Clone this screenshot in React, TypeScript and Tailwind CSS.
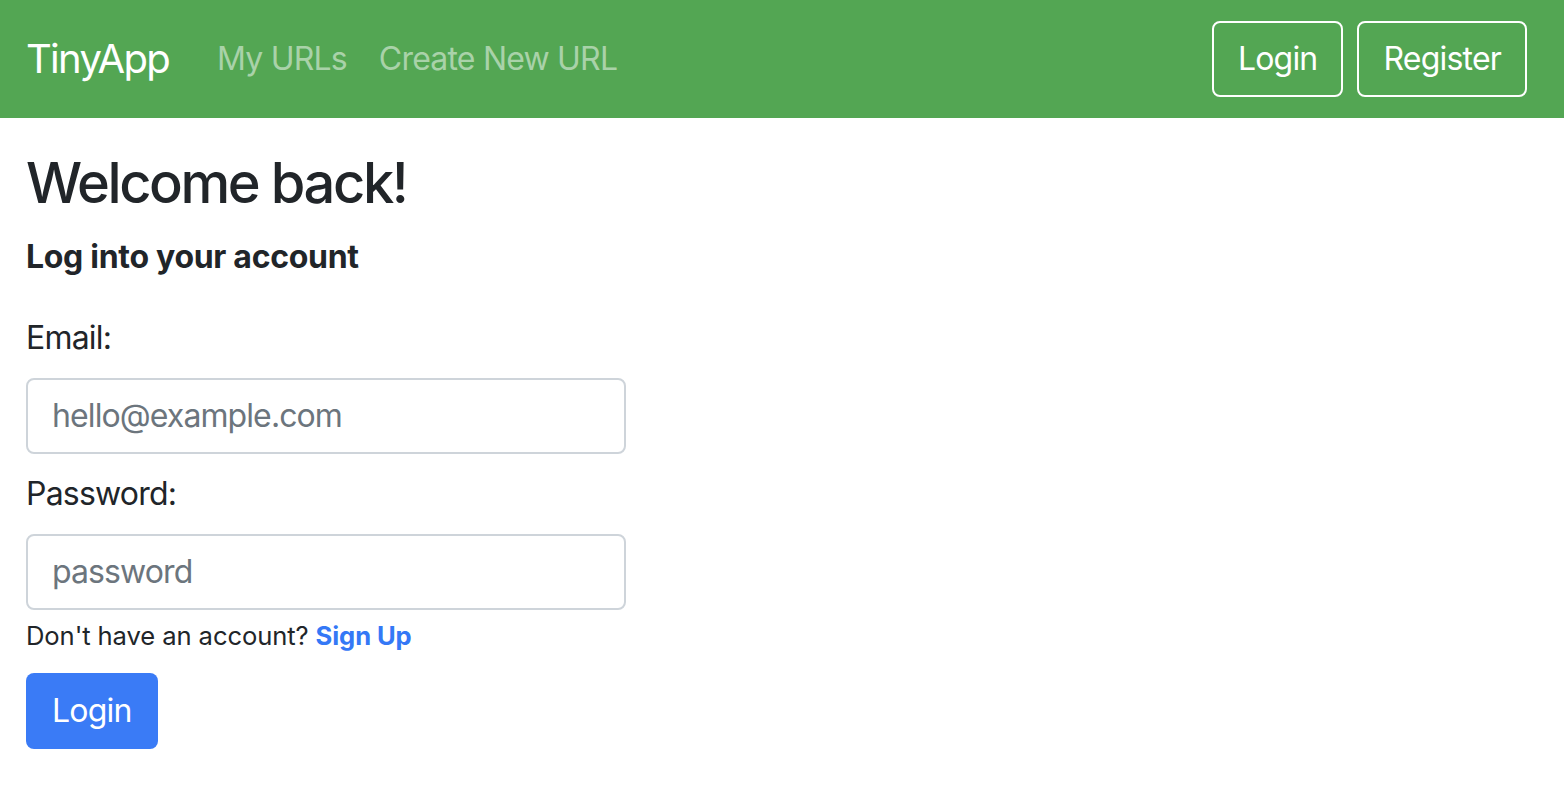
export default function App() {
  return (
    <div className="min-h-screen bg-white font-['Inter',sans-serif] text-[#212529]">
      <nav className="flex h-[118px] items-center justify-between bg-[#53a653] pl-[26px] pr-[37px]">
        <div className="flex items-center">
          <a className="text-[40px] leading-[1.5] tracking-[-1.7px] text-white" href="#">
            TinyApp
          </a>
          <div className="ml-[48px] flex items-center gap-[32px] text-[32px] leading-[1.5] tracking-[-0.8px] text-[#a9d2a9]">
            <a href="#">My URLs</a>
            <a href="#">Create New URL</a>
          </div>
        </div>
        <div className="flex items-center gap-[14px]">
          <button className="h-[76px] rounded-[8px] border-2 border-white px-[24px] text-[32px] tracking-[-0.8px] text-white">
            Login
          </button>
          <button className="h-[76px] rounded-[8px] border-2 border-white px-[24px] text-[32px] tracking-[-0.8px] text-white">
            Register
          </button>
        </div>
      </nav>

      <main className="px-[26px] pt-[32px]">
        <h1 className="text-[56px] font-medium leading-[1.2] tracking-[-2.4px]">Welcome back!</h1>
        <h2 className="mt-[21px] text-[32px] font-bold leading-[1.2] tracking-[-0.3px]">Log into your account</h2>

        <form className="mt-[37px] w-[600px]">
          <label className="block text-[32px] leading-[1.5] tracking-[-0.8px]" htmlFor="email">
            Email:
          </label>
          <input
            className="mt-[16px] block h-[76px] w-full rounded-[8px] border-2 border-[#ced4da] px-[24px] text-[32px] tracking-[-0.9px] placeholder:text-[#6c757d] focus:outline-none"
            id="email"
            placeholder="hello@example.com"
            type="email"
          />
          <label className="mt-[16px] block text-[32px] leading-[1.5] tracking-[-0.8px]" htmlFor="password">
            Password:
          </label>
          <input
            className="mt-[16px] block h-[76px] w-full rounded-[8px] border-2 border-[#ced4da] px-[24px] text-[32px] tracking-[-0.9px] placeholder:text-[#6c757d] focus:outline-none"
            id="password"
            placeholder="password"
            type="password"
          />
          <p className="mt-[7px] text-[25.6px] leading-[1.5] tracking-[-0.1px]">
            Don't have an account?{" "}
            <a className="font-bold text-[#3478f6]" href="#">
              Sign Up
            </a>
          </p>
          <button
            className="mt-[18px] h-[76px] rounded-[8px] bg-[#3a7bf6] px-[26px] text-[32px] tracking-[-0.8px] text-white"
            type="submit"
          >
            Login
          </button>
        </form>
      </main>
    </div>
  );
}
